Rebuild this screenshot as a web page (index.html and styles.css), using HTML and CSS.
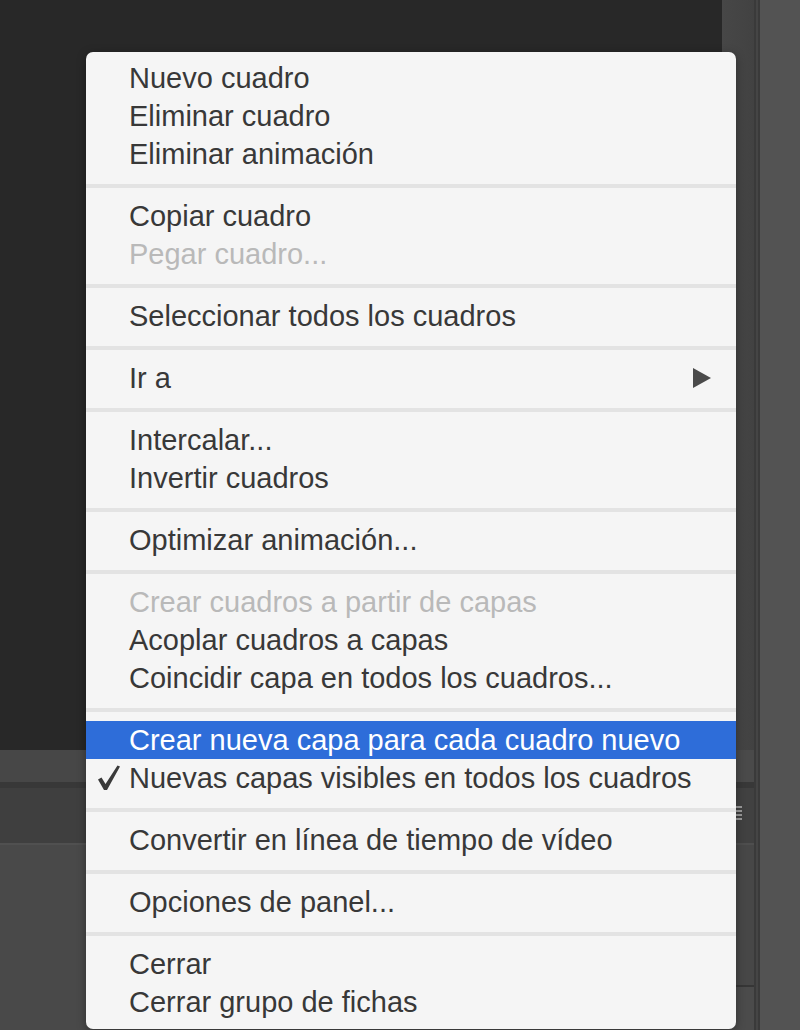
FILE: index.html
```html
<!DOCTYPE html>
<html lang="es">
<head>
    <meta charset="UTF-8">
    <meta name="viewport" content="width=device-width, initial-scale=1.0">
    <title>Menú de animación</title>
    <link rel="stylesheet" href="styles.css">
</head>
<body>
    <div class="workspace">
        <div class="main-area">
            <div class="canvas"></div>
            <div class="timeline-tabs"></div>
            <div class="timeline-split"></div>
            <div class="timeline-header"></div>
            <div class="timeline-body"></div>
        </div>
        <div class="dock">
            <div class="dock-top"></div>
            <div class="dock-tab"></div>
            <div class="timeline-split"></div>
            <div class="dock-header">
                <svg class="grip" viewBox="0 0 6 14" width="6" height="14">
                    <rect x="0" y="0" width="6" height="2" fill="#9a9a9a"/>
                    <rect x="0" y="4" width="6" height="2" fill="#9a9a9a"/>
                    <rect x="0" y="8" width="6" height="2" fill="#9a9a9a"/>
                    <rect x="0" y="12" width="6" height="2" fill="#9a9a9a"/>
                </svg>
            </div>
            <div class="dock-body"></div>
            <div class="dock-foot"></div>
        </div>
        <div class="divider"></div>
        <div class="side-panel"></div>
    </div>

    <div class="context-menu">
        <div class="menu-item">Nuevo cuadro</div>
        <div class="menu-item">Eliminar cuadro</div>
        <div class="menu-item">Eliminar animación</div>
        <div class="menu-separator"></div>
        <div class="menu-item">Copiar cuadro</div>
        <div class="menu-item disabled">Pegar cuadro...</div>
        <div class="menu-separator"></div>
        <div class="menu-item">Seleccionar todos los cuadros</div>
        <div class="menu-separator"></div>
        <div class="menu-item">Ir a
            <svg class="submenu-arrow" viewBox="0 0 18 20" width="18" height="20"><path d="M0 0 L18 10 L0 20 Z" fill="#4a4a4a"/></svg>
        </div>
        <div class="menu-separator"></div>
        <div class="menu-item">Intercalar...</div>
        <div class="menu-item">Invertir cuadros</div>
        <div class="menu-separator"></div>
        <div class="menu-item">Optimizar animación...</div>
        <div class="menu-separator"></div>
        <div class="menu-item disabled">Crear cuadros a partir de capas</div>
        <div class="menu-item">Acoplar cuadros a capas</div>
        <div class="menu-item">Coincidir capa en todos los cuadros...</div>
        <div class="menu-separator"></div>
        <div class="menu-item active">Crear nueva capa para cada cuadro nuevo</div>
        <div class="menu-item">
            <svg class="check" viewBox="0 0 24 26" width="24" height="26"><path d="M1 14.5 L4.5 12.5 L8.5 19 L20.5 0.5 L23 1.5 L10 25 L7 25 Z" fill="#3a3a3a"/></svg>
            Nuevas capas visibles en todos los cuadros
        </div>
        <div class="menu-separator"></div>
        <div class="menu-item">Convertir en línea de tiempo de vídeo</div>
        <div class="menu-separator"></div>
        <div class="menu-item">Opciones de panel...</div>
        <div class="menu-separator"></div>
        <div class="menu-item">Cerrar</div>
        <div class="menu-item">Cerrar grupo de fichas</div>
    </div>
</body>
</html>
```

FILE: styles.css
```css
body {
    margin: 0;
    width: 800px;
    height: 1030px;
    overflow: hidden;
    background-color: #535353;
    font-family: 'Liberation Sans', Arial, sans-serif;
}
.workspace {
    display: flex;
    height: 1030px;
}
.main-area {
    width: 722px;
    display: flex;
    flex-direction: column;
}
.canvas {
    height: 750px;
    background-color: #282828;
}
.timeline-tabs {
    height: 32px;
    background-color: #474747;
}
.timeline-split {
    height: 6px;
    background-color: #383838;
}
.timeline-header {
    height: 55px;
    background-color: #3f3f3f;
    border-bottom: 2px solid #505050;
}
.timeline-body {
    flex: 1;
    background-color: #494949;
}
.dock {
    width: 32px;
    display: flex;
    flex-direction: column;
    background: linear-gradient(to right, #474747, #424242);
}
.dock-top {
    height: 750px;
}
.dock-tab {
    height: 32px;
    background-color: #4a4a4a;
}
.dock-header {
    height: 55px;
    background-color: #414141;
    border-bottom: 2px solid #4e4e4e;
    display: flex;
    align-items: center;
}
.grip {
    margin-left: 14px;
    margin-top: -6px;
}
.dock-body {
    height: 140px;
    background-color: #474747;
    border-bottom: 2px solid #363636;
}
.dock-foot {
    flex: 1;
    background-color: #4b4b4b;
}
.divider {
    width: 6px;
    background: linear-gradient(to right, #3a3a3a 0 2px, #454545 2px 4px, #3a3a3a 4px 6px);
}
.side-panel {
    flex: 1;
    background-color: #535353;
}
.context-menu {
    position: absolute;
    left: 86px;
    top: 52px;
    width: 650px;
    padding: 7px 0 8px;
    background-color: #f5f5f5;
    border-radius: 7px;
    box-shadow: 0 2px 10px rgba(0, 0, 0, 0.35);
}
.menu-item {
    position: relative;
    height: 38px;
    line-height: 38px;
    padding-left: 43px;
    font-size: 29px;
    color: #383838;
    white-space: nowrap;
}
.menu-item.disabled {
    color: #b9b9b9;
}
.menu-item.active {
    background-color: #2e6dd9;
    color: #fff;
}
.menu-separator {
    height: 4px;
    margin: 11px 0 9px;
    background-color: #e3e3e3;
}
.check {
    position: absolute;
    left: 11px;
    top: 6px;
}
.submenu-arrow {
    position: absolute;
    right: 25px;
    top: 9px;
}
```
